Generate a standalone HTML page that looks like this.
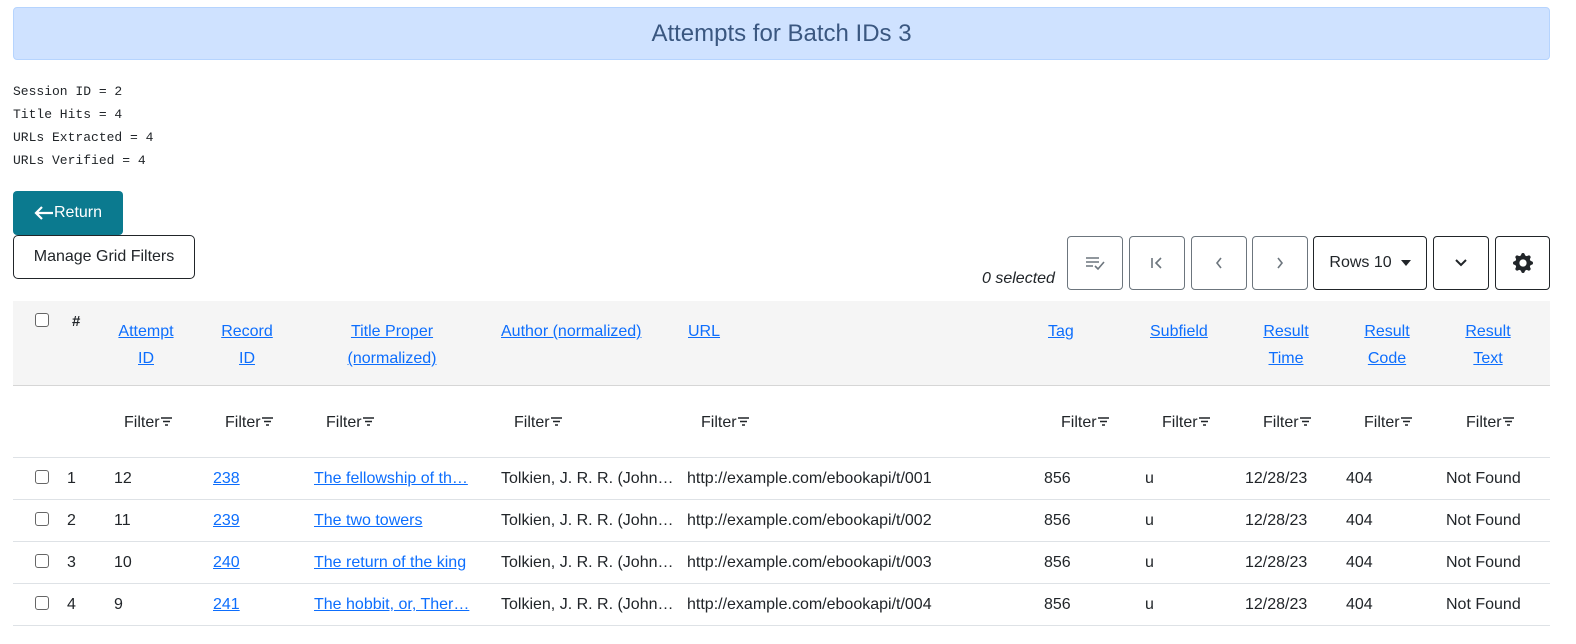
<!DOCTYPE html>
<html><head><meta charset="utf-8"><style>
*{box-sizing:border-box;margin:0;padding:0}
body{width:1576px;height:644px;background:#fff;font-family:"Liberation Sans",sans-serif;font-size:16px;color:#212529;position:relative;overflow:hidden}
.a{position:absolute;white-space:nowrap;line-height:20px}
.l{color:#0d6efd;text-decoration:underline}
.c{text-align:center}
.h{line-height:27px;top:318px}
.mono{font-family:"Liberation Mono",monospace;font-size:13px;position:absolute;left:13px;line-height:23px}
.btn{position:absolute;border:1px solid #6c757d;border-radius:4px;background:#fff;display:flex;align-items:center;justify-content:center;color:#6c757d}
.btn.d{border-color:#212529;color:#212529}
.cb{position:absolute;width:14px;height:14px;border:1px solid #666;border-radius:3px;background:#fff}
.hr{position:absolute;left:13px;width:1537px;height:1px;background:#dee2e6}
</style></head><body>
<div style="position:absolute;left:13px;top:7px;width:1537px;height:53px;background:#cfe2ff;border:1px solid #b6d4fe;border-radius:4px;color:#3a5780;font-size:24px;display:flex;align-items:center;justify-content:center">Attempts for Batch IDs 3</div>
<div class="mono" style="top:80px">Session ID = 2<br>Title Hits = 4<br>URLs Extracted = 4<br>URLs Verified = 4</div>
<div style="position:absolute;left:13px;top:191px;width:110px;height:44px;background:#0b7a8f;border-radius:4px;color:#fff;font-size:16px;display:flex;align-items:center;justify-content:center"><svg width="20" height="14" viewBox="0 0 20 14" fill="none" stroke="#fff" stroke-width="2.2"><path d="M19 7H3M8 1L2 7l6 6"/></svg>Return</div>
<div style="position:absolute;left:13px;top:235px;width:182px;height:44px;border:1px solid #212529;border-radius:5px;display:flex;align-items:center;justify-content:center">Manage Grid Filters</div>
<div class="a" style="left:982px;top:269px;font-style:italic">0 selected</div>
<div class="btn" style="left:1067px;top:236px;width:56px;height:54px"><svg width="22" height="16" viewBox="0 0 22 16" fill="none" stroke="#6c757d" stroke-width="1.6"><path d="M2 3h13M2 7h13M2 11h7M11 11l3 3 6-7"/></svg></div>
<div class="btn" style="left:1129px;top:236px;width:56px;height:54px"><svg width="16" height="16" viewBox="0 0 16 16" fill="none" stroke="#6c757d" stroke-width="1.6"><path d="M3 3v10M12 3L7 8l5 5"/></svg></div>
<div class="btn" style="left:1191px;top:236px;width:56px;height:54px"><svg width="16" height="16" viewBox="0 0 16 16" fill="none" stroke="#6c757d" stroke-width="1.6"><path d="M10 3L6 8l4 5"/></svg></div>
<div class="btn" style="left:1252px;top:236px;width:56px;height:54px"><svg width="16" height="16" viewBox="0 0 16 16" fill="none" stroke="#6c757d" stroke-width="1.6"><path d="M6 3l4 5-4 5"/></svg></div>
<div class="btn d" style="left:1313px;top:236px;width:114px;height:54px">Rows 10&nbsp;&nbsp;<svg width="10" height="6" viewBox="0 0 10 6"><path d="M0 0h10L5 6z" fill="#212529"/></svg></div>
<div class="btn d" style="left:1433px;top:236px;width:56px;height:54px"><svg width="14" height="10" viewBox="0 0 14 10" fill="none" stroke="#212529" stroke-width="2"><path d="M2 2l5 5 5-5"/></svg></div>
<div class="btn d" style="left:1495px;top:236px;width:55px;height:54px"><svg width="20" height="20" viewBox="0 0 16 16"><path fill="#212529" d="M9.4 1.1c-.4-1.5-2.4-1.5-2.8 0l-.1.3a1.5 1.5 0 0 1-2.1.9l-.3-.2c-1.3-.8-2.800.7-2 2l.2.3a1.5 1.5 0 0 1-.9 2.1l-.3.1c-1.5.4-1.5 2.4 0 2.8l.3.1a1.5 1.5 0 0 1 .9 2.1l-.2.3c-.8 1.3.7 2.8 2 2l.3-.2a1.5 1.5 0 0 1 2.1.9l.1.3c.4 1.5 2.4 1.5 2.8 0l.1-.3a1.5 1.5 0 0 1 2.1-.9l.3.2c1.3.8 2.8-.7 2-2l-.2-.3a1.5 1.5 0 0 1 .9-2.1l.3-.1c1.5-.4 1.5-2.4 0-2.8l-.3-.1a1.5 1.5 0 0 1-.9-2.1l.2-.3c.8-1.3-.7-2.8-2-2l-.3.2a1.5 1.5 0 0 1-2.1-.9zM8 10.9a2.9 2.9 0 1 1 0-5.8 2.9 2.9 0 0 1 0 5.8z"/></svg></div>

<div style="position:absolute;left:13px;top:301px;width:1537px;height:84px;background:#f5f5f5"></div>
<div class="hr" style="top:385px;background:#d6d6d6"></div>
<div class="cb" style="left:35px;top:313px"></div>
<div class="a" style="left:72px;top:312px;font-weight:bold;font-size:15px">#</div>
<div class="a l c h" style="left:96px;width:100px">Attempt<br>ID</div>
<div class="a l c h" style="left:197px;width:100px">Record<br>ID</div>
<div class="a l c h" style="left:312px;width:160px">Title Proper<br>(normalized)</div>
<div class="a l h" style="left:501px">Author (normalized)</div>
<div class="a l h" style="left:688px">URL</div>
<div class="a l h" style="left:1048px">Tag</div>
<div class="a l h" style="left:1150px">Subfield</div>
<div class="a l c h" style="left:1236px;width:100px">Result<br>Time</div>
<div class="a l c h" style="left:1337px;width:100px">Result<br>Code</div>
<div class="a l c h" style="left:1438px;width:100px">Result<br>Text</div>

<div class="a" style="left:124px;top:413px">Filter<svg width="13" height="10" viewBox="0 0 13 10"><path d="M1 1h11M3 4.5h7M5 8h3" stroke="#212529" stroke-width="1.6"/></svg></div>
<div class="a" style="left:225px;top:413px">Filter<svg width="13" height="10" viewBox="0 0 13 10"><path d="M1 1h11M3 4.5h7M5 8h3" stroke="#212529" stroke-width="1.6"/></svg></div>
<div class="a" style="left:326px;top:413px">Filter<svg width="13" height="10" viewBox="0 0 13 10"><path d="M1 1h11M3 4.5h7M5 8h3" stroke="#212529" stroke-width="1.6"/></svg></div>
<div class="a" style="left:514px;top:413px">Filter<svg width="13" height="10" viewBox="0 0 13 10"><path d="M1 1h11M3 4.5h7M5 8h3" stroke="#212529" stroke-width="1.6"/></svg></div>
<div class="a" style="left:701px;top:413px">Filter<svg width="13" height="10" viewBox="0 0 13 10"><path d="M1 1h11M3 4.5h7M5 8h3" stroke="#212529" stroke-width="1.6"/></svg></div>
<div class="a" style="left:1061px;top:413px">Filter<svg width="13" height="10" viewBox="0 0 13 10"><path d="M1 1h11M3 4.5h7M5 8h3" stroke="#212529" stroke-width="1.6"/></svg></div>
<div class="a" style="left:1162px;top:413px">Filter<svg width="13" height="10" viewBox="0 0 13 10"><path d="M1 1h11M3 4.5h7M5 8h3" stroke="#212529" stroke-width="1.6"/></svg></div>
<div class="a" style="left:1263px;top:413px">Filter<svg width="13" height="10" viewBox="0 0 13 10"><path d="M1 1h11M3 4.5h7M5 8h3" stroke="#212529" stroke-width="1.6"/></svg></div>
<div class="a" style="left:1364px;top:413px">Filter<svg width="13" height="10" viewBox="0 0 13 10"><path d="M1 1h11M3 4.5h7M5 8h3" stroke="#212529" stroke-width="1.6"/></svg></div>
<div class="a" style="left:1466px;top:413px">Filter<svg width="13" height="10" viewBox="0 0 13 10"><path d="M1 1h11M3 4.5h7M5 8h3" stroke="#212529" stroke-width="1.6"/></svg></div>

<div class="hr" style="top:457px"></div>
<div class="hr" style="top:499px"></div>
<div class="hr" style="top:541px"></div>
<div class="hr" style="top:583px"></div>
<div class="hr" style="top:625px"></div>

<div class="cb" style="left:35px;top:470px"></div>
<div class="a" style="left:67px;top:469px">1</div><div class="a" style="left:114px;top:469px">12</div><div class="a l" style="left:213px;top:469px">238</div>
<div class="a l" style="left:314px;top:469px">The fellowship of th…</div><div class="a" style="left:501px;top:469px">Tolkien, J. R. R. (John…</div>
<div class="a" style="left:687px;top:469px">http://example.com/ebookapi/t/001</div>
<div class="a" style="left:1044px;top:469px">856</div><div class="a" style="left:1145px;top:469px">u</div><div class="a" style="left:1245px;top:469px">12/28/23</div><div class="a" style="left:1346px;top:469px">404</div><div class="a" style="left:1446px;top:469px">Not Found</div>

<div class="cb" style="left:35px;top:512px"></div>
<div class="a" style="left:67px;top:511px">2</div><div class="a" style="left:114px;top:511px">11</div><div class="a l" style="left:213px;top:511px">239</div>
<div class="a l" style="left:314px;top:511px">The two towers</div><div class="a" style="left:501px;top:511px">Tolkien, J. R. R. (John…</div>
<div class="a" style="left:687px;top:511px">http://example.com/ebookapi/t/002</div>
<div class="a" style="left:1044px;top:511px">856</div><div class="a" style="left:1145px;top:511px">u</div><div class="a" style="left:1245px;top:511px">12/28/23</div><div class="a" style="left:1346px;top:511px">404</div><div class="a" style="left:1446px;top:511px">Not Found</div>

<div class="cb" style="left:35px;top:554px"></div>
<div class="a" style="left:67px;top:553px">3</div><div class="a" style="left:114px;top:553px">10</div><div class="a l" style="left:213px;top:553px">240</div>
<div class="a l" style="left:314px;top:553px">The return of the king</div><div class="a" style="left:501px;top:553px">Tolkien, J. R. R. (John…</div>
<div class="a" style="left:687px;top:553px">http://example.com/ebookapi/t/003</div>
<div class="a" style="left:1044px;top:553px">856</div><div class="a" style="left:1145px;top:553px">u</div><div class="a" style="left:1245px;top:553px">12/28/23</div><div class="a" style="left:1346px;top:553px">404</div><div class="a" style="left:1446px;top:553px">Not Found</div>

<div class="cb" style="left:35px;top:596px"></div>
<div class="a" style="left:67px;top:595px">4</div><div class="a" style="left:114px;top:595px">9</div><div class="a l" style="left:213px;top:595px">241</div>
<div class="a l" style="left:314px;top:595px">The hobbit, or, Ther…</div><div class="a" style="left:501px;top:595px">Tolkien, J. R. R. (John…</div>
<div class="a" style="left:687px;top:595px">http://example.com/ebookapi/t/004</div>
<div class="a" style="left:1044px;top:595px">856</div><div class="a" style="left:1145px;top:595px">u</div><div class="a" style="left:1245px;top:595px">12/28/23</div><div class="a" style="left:1346px;top:595px">404</div><div class="a" style="left:1446px;top:595px">Not Found</div>
</body></html>
